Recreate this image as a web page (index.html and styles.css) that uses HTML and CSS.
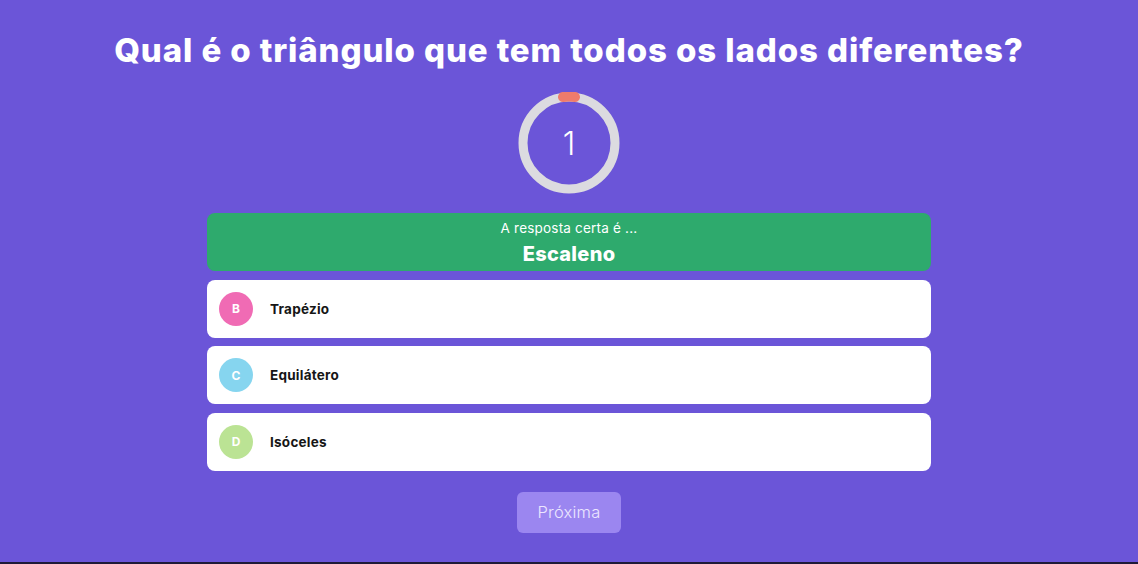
FILE: index.html
```html
<!DOCTYPE html>
<html lang="pt">
<head>
<meta charset="utf-8">
<title>Quiz</title>
<link rel="stylesheet" href="styles.css">
</head>
<body>
<main class="quiz">
  <h1 class="question">Qual é o triângulo que tem todos os lados diferentes?</h1>
  <div class="timer">
    <svg class="timer-ring" width="102" height="102" viewBox="0 0 102 102">
      <circle cx="51" cy="51" r="46" fill="none" stroke="#dcdbe0" stroke-width="9"/>
      <path d="M45 5 A46 46 0 0 1 57 5" fill="none" stroke="#ef7b6c" stroke-width="10" stroke-linecap="round"/>
    </svg>
    <span class="timer-value">1</span>
  </div>
  <div class="answers">
    <div class="correct">
      <div class="correct-label">A resposta certa é ...</div>
      <div class="correct-value">Escaleno</div>
    </div>
    <div class="option"><span class="badge badge-b">B</span><span class="option-text">Trapézio</span></div>
    <div class="option"><span class="badge badge-c">C</span><span class="option-text">Equilátero</span></div>
    <div class="option"><span class="badge badge-d">D</span><span class="option-text">Isóceles</span></div>
  </div>
  <button class="next">Próxima</button>
</main>
<div class="bottom-strip"></div>
</body>
</html>
```
FILE: styles.css
```css
html, body {
  margin: 0;
  padding: 0;
  height: 100%;
}
body {
  background: #6b55d8;
  font-family: "Open Sans", "Noto Sans", sans-serif;
  overflow: hidden;
  display: flex;
  flex-direction: column;
}
.quiz {
  flex: 1;
  display: flex;
  flex-direction: column;
  align-items: center;
  padding-top: 28px;
}
.question {
  margin: 0;
  color: #ffffff;
  font-family: "Inter", sans-serif;
  font-weight: 800;
  font-size: 33px;
  line-height: 44px;
  letter-spacing: 0.9px;
  text-align: center;
}
.timer {
  margin-top: 20px;
  width: 102px;
  height: 102px;
  position: relative;
  display: flex;
  align-items: center;
  justify-content: center;
}
.timer-ring {
  position: absolute;
  left: 0;
  top: 0;
}
.timer-value {
  color: #ffffff;
  font-family: "Inter", sans-serif;
  font-weight: 300;
  font-size: 32px;
}
.answers {
  margin-top: 19px;
  width: 724px;
  display: flex;
  flex-direction: column;
  gap: 8.5px;
}
.correct {
  background: #2eaa6d;
  border-radius: 8px;
  height: 58px;
  box-sizing: border-box;
  padding-top: 6px;
  display: flex;
  flex-direction: column;
  align-items: center;
  color: #ffffff;
}
.correct-label {
  font-family: "Inter", sans-serif;
  font-size: 13.5px;
  line-height: 18px;
  font-weight: 400;
  letter-spacing: 0.2px;
}
.correct-value {
  margin-top: 3px;
  font-family: "Inter", sans-serif;
  font-size: 20px;
  font-weight: 800;
  line-height: 28px;
  letter-spacing: 0.3px;
}
.option {
  background: #ffffff;
  border-radius: 8px;
  height: 58px;
  display: flex;
  align-items: center;
  padding-left: 12px;
}
.badge {
  width: 34px;
  height: 34px;
  border-radius: 50%;
  display: flex;
  align-items: center;
  justify-content: center;
  color: #ffffff;
  font-family: "Inter", sans-serif;
  font-weight: 700;
  font-size: 12px;
}
.badge-b { background: #f06bb4; }
.badge-c { background: #86d5ef; }
.badge-d { background: #bbe394; }
.option-text {
  margin-left: 17px;
  font-family: "Inter", sans-serif;
  font-weight: 700;
  font-size: 13.5px;
  letter-spacing: 0.25px;
  color: #161616;
}
.next {
  margin-top: 21px;
  width: 104px;
  height: 41px;
  border: none;
  border-radius: 6px;
  background: #9b86f0;
  color: #ece6ff;
  font-family: "Inter", sans-serif;
  font-weight: 300;
  font-size: 16.5px;
  letter-spacing: 0.2px;
  padding: 0;
}
.bottom-strip {
  height: 2px;
  background: #1e1a38;
  flex: none;
}
```
